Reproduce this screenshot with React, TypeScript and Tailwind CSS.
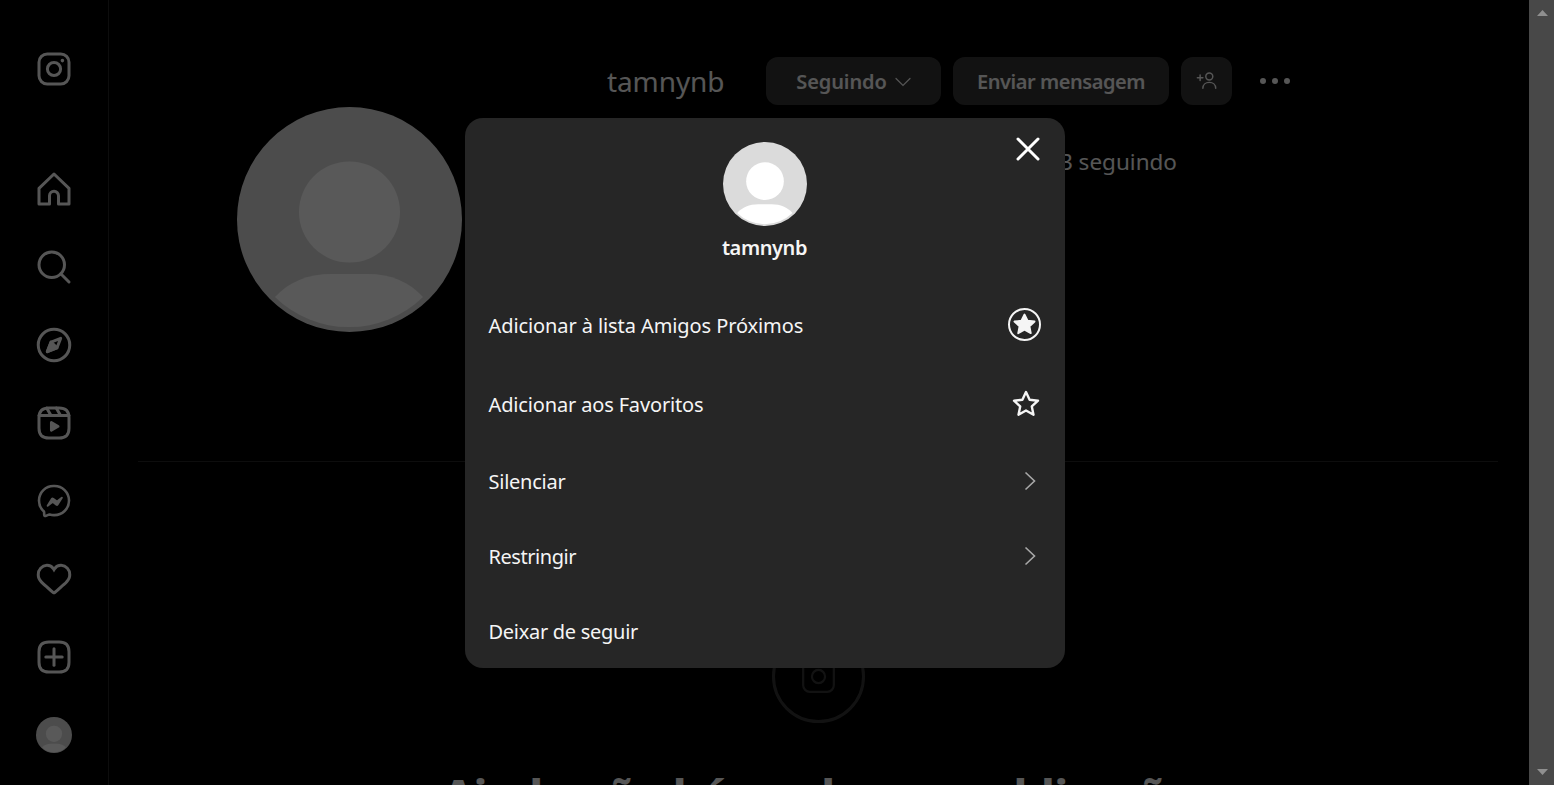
import React from 'react';

const font = 'font-["Noto_Sans",sans-serif]';

function NavIcon({ children }: { children: React.ReactNode }) {
  return (
    <svg viewBox="0 0 24 24" className="w-9 h-9 text-[#f5f5f5]" fill="none" stroke="currentColor" strokeWidth={2} strokeLinecap="round" strokeLinejoin="round">
      {children}
    </svg>
  );
}

function Avatar({ size }: { size: string }) {
  return (
    <svg viewBox="0 0 225 225" className={size}>
      <circle cx="112.5" cy="112.5" r="112.5" fill="#dbdbdb" />
      <circle cx="112.5" cy="105" r="50.5" fill="#ffffff" />
      <path d="M38 190C52 175 70 167 95 167H130C155 167 172 175 186 190A106 106 0 0 1 38 190Z" fill="#ffffff" />
    </svg>
  );
}

function Sidebar() {
  return (
    <aside className="w-[109px] shrink-0 h-full border-r border-[#262626] flex flex-col items-center pt-[51px]">
      <div className="h-9 mb-[84px]">
        <NavIcon>
          <rect x="2" y="2" width="20" height="20" rx="5.5" />
          <circle cx="12" cy="12" r="4.4" />
          <circle cx="17.6" cy="6.4" r="0.6" fill="currentColor" strokeWidth={1.2} />
        </NavIcon>
      </div>
      <div className="flex flex-col items-center gap-[42px]">
        <NavIcon>
          <path d="M9.005 16.545a2.997 2.997 0 0 1 2.997-2.997A2.997 2.997 0 0 1 15 16.545V22h7V11.543L12 2 2 11.543V22h7.005Z" />
        </NavIcon>
        <NavIcon>
          <path d="M19 10.5A8.5 8.5 0 1 1 10.5 2a8.5 8.5 0 0 1 8.5 8.5Z" />
          <line x1="16.511" y1="16.511" x2="22" y2="22" />
        </NavIcon>
        <NavIcon>
          <polygon points="13.941 13.953 7.581 16.424 10.06 10.056 16.42 7.585 13.941 13.953" />
          <polygon points="10.06 10.056 13.949 13.945 7.581 16.424 10.06 10.056" fill="currentColor" />
          <circle cx="12" cy="12" r="10.5" />
        </NavIcon>
        <NavIcon>
          <line x1="2.049" y1="7.002" x2="21.95" y2="7.002" />
          <line x1="13.504" y1="2.001" x2="16.362" y2="7.002" />
          <line x1="7.207" y1="2.11" x2="10.002" y2="7.002" />
          <path d="M2 12.001v3.449c0 2.849.698 4.006 1.606 4.945.94.908 2.098 1.607 4.946 1.607h6.896c2.848 0 4.006-.699 4.946-1.607.908-.939 1.606-2.096 1.606-4.945V8.552c0-2.848-.698-4.006-1.606-4.945C19.454 2.699 18.296 2 15.448 2H8.552c-2.848 0-4.006.699-4.946 1.607C2.698 4.546 2 5.704 2 8.552Z" />
          <path d="M9.763 17.664a.908.908 0 0 1-.454-.787V11.63a.909.909 0 0 1 1.364-.788l4.545 2.624a.909.909 0 0 1 0 1.575l-4.545 2.624a.91.91 0 0 1-.91 0Z" fill="currentColor" stroke="none" />
        </NavIcon>
        <NavIcon>
          <path d="M12.003 2.001a9.705 9.705 0 1 1 0 19.4 10.876 10.876 0 0 1-2.895-.384.798.798 0 0 0-.533.04l-1.984.876a.801.801 0 0 1-1.123-.708l-.054-1.78a.806.806 0 0 0-.27-.569 9.49 9.49 0 0 1-3.14-7.175 9.65 9.65 0 0 1 10-9.7Z" strokeWidth={1.739} />
          <path d="M17.79 10.132a.659.659 0 0 0-.962-.873l-2.556 2.05a.483.483 0 0 1-.58.012l-1.882-1.403a1.205 1.205 0 0 0-1.739.324l-2.855 4.53a.659.659 0 0 0 .962.873l2.556-2.05a.483.483 0 0 1 .58-.012l1.881 1.403a1.205 1.205 0 0 0 1.74-.324l2.855-4.53Z" fill="currentColor" stroke="none" />
        </NavIcon>
        <NavIcon>
          <path d="M16.792 3.904A4.989 4.989 0 0 1 21.5 9.122c0 3.072-2.652 4.959-5.197 7.222-2.512 2.243-3.865 3.469-4.303 3.752-.477-.309-2.143-1.823-4.303-3.752C5.141 14.072 2.5 12.167 2.5 9.122a4.989 4.989 0 0 1 4.708-5.218 4.21 4.21 0 0 1 3.675 1.941c.84 1.175.98 1.763 1.12 1.763s.278-.588 1.11-1.766a4.17 4.17 0 0 1 3.679-1.938m0-2a6.04 6.04 0 0 0-4.797 2.127 6.052 6.052 0 0 0-4.787-2.127A6.985 6.985 0 0 0 .5 9.122c0 3.61 2.55 5.827 5.015 7.97.283.246.569.494.853.747l1.027.918a44.998 44.998 0 0 0 3.518 3.018 2 2 0 0 0 2.174 0 45.263 45.263 0 0 0 3.626-3.115l.922-.824c.293-.26.59-.519.885-.774 2.334-2.025 4.98-4.32 4.98-7.94a6.985 6.985 0 0 0-6.708-7.218Z" fill="currentColor" stroke="none" />
        </NavIcon>
        <NavIcon>
          <path d="M2 12v3.45c0 2.849.698 4.005 1.606 4.944.94.909 2.098 1.608 4.946 1.608h6.896c2.848 0 4.006-.7 4.946-1.608C21.302 19.455 22 18.3 22 15.45V8.552c0-2.849-.698-4.006-1.606-4.945C19.454 2.7 18.296 2 15.448 2H8.552c-2.848 0-4.006.699-4.946 1.607C2.698 4.547 2 5.703 2 8.552Z" />
          <line x1="6.545" y1="12.001" x2="17.455" y2="12.001" />
          <line x1="12.003" y1="6.545" x2="12.003" y2="17.455" />
        </NavIcon>
        <Avatar size="w-9 h-9" />
      </div>
    </aside>
  );
}

function Profile() {
  return (
    <main className="flex-1 min-w-0 pl-[29px] pr-[31px] flex flex-col">
      <section className="flex shrink-0 h-[461px] pl-[99px] pt-[107px]">
        <Avatar size="w-[225px] h-[225px] shrink-0" />
        <div className="ml-[145px] -mt-[50px] flex-1">
          <div className="flex items-center h-[48px]">
            <span className="text-[28px] tracking-[-0.1px] text-[#f5f5f5] w-[159px]">tamnynb</span>
            <button className="w-[175px] h-[48px] pt-px rounded-xl bg-[#363636] text-[#f5f5f5] text-[20px] tracking-[-0.1px] font-semibold flex items-center justify-center gap-2">
              Seguindo
              <svg viewBox="0 0 16 10" className="w-4 h-[10px]" fill="none" stroke="currentColor" strokeWidth={1.2} strokeLinecap="round"><path d="M1 1.5 8 8.5 15 1.5" /></svg>
            </button>
            <button className="ml-3 w-[216px] h-[48px] pt-px rounded-xl bg-[#363636] text-[#f5f5f5] text-[20px] tracking-[-0.45px] font-semibold">Enviar mensagem</button>
            <button className="ml-3 w-[51px] h-[48px] rounded-xl bg-[#363636] text-[#f5f5f5] flex items-center justify-center">
              <svg viewBox="0 0 24 24" className="w-[22px] h-[22px]" fill="none" stroke="currentColor" strokeWidth={1.6} strokeLinecap="round">
                <circle cx="14.5" cy="7" r="3.8" />
                <path d="M7.5 20c0-4 3-6.5 7-6.5s7 2.5 7 6.5" />
                <path d="M1.5 8.5h6M4.5 5.5v6" />
              </svg>
            </button>
            <div className="ml-7 flex gap-[6px]">
              <span className="w-[6px] h-[6px] rounded-full bg-[#f5f5f5]" />
              <span className="w-[6px] h-[6px] rounded-full bg-[#f5f5f5]" />
              <span className="w-[6px] h-[6px] rounded-full bg-[#f5f5f5]" />
            </div>
          </div>
          <div className="mt-[42px] flex justify-end pr-[321px] text-[22.5px] text-[#f5f5f5] leading-[30px]">
            <span>183 seguindo</span>
          </div>
        </div>
      </section>
      <div className="h-px shrink-0 bg-[#262626]" />
      <section className="flex flex-col items-center pt-[168px]">
        <div className="w-[93px] h-[93px] shrink-0 rounded-full border-[3px] border-[#363636] flex items-center justify-center">
          <svg viewBox="0 0 32 32" className="w-[35px] h-[35px] text-[#363636]" fill="none" stroke="currentColor" strokeWidth={2}>
            <rect x="2" y="2" width="28" height="28" rx="6" />
            <circle cx="16" cy="16" r="6" />
          </svg>
        </div>
        <h2 className="mt-[42px] shrink-0 text-[43px] leading-[60px] font-extrabold text-[#f5f5f5] whitespace-nowrap">Ainda não há nenhuma publicação</h2>
      </section>
    </main>
  );
}

function Row({ label, children, className }: { label: string; children?: React.ReactNode; className: string }) {
  return (
    <div className={`flex items-center justify-between pl-6 text-[20px] text-[#f5f5f5] ${className}`}>
      <span>{label}</span>
      {children}
    </div>
  );
}

function Modal() {
  return (
    <div className="absolute inset-0 bg-black/65 flex items-center justify-center">
      <div className="relative w-[600px] h-[550px] rounded-[18px] bg-[#262626] flex flex-col">
        <button className="absolute top-[19px] right-[25px] text-white">
          <svg viewBox="0 0 24 24" className="w-6 h-6" fill="none" stroke="currentColor" strokeWidth={3} strokeLinecap="round">
            <path d="M2 2 22 22M22 2 2 22" />
          </svg>
        </button>
        <div className="flex flex-col items-center pt-6">
          <Avatar size="w-[84px] h-[84px]" />
          <span className="mt-2 text-[20px] leading-[28px] tracking-[-0.4px] font-semibold text-[#f5f5f5]">tamnynb</span>
        </div>
        <div className="flex flex-col mt-[25px]">
          <Row label="Adicionar à lista Amigos Próximos" className="h-[79px] pr-6 tracking-[-0.09px]">
            <svg viewBox="0 0 33 33" className="w-[33px] h-[33px] -mt-[3px] text-[#f5f5f5]">
              <circle cx="16.5" cy="16.5" r="15.5" fill="none" stroke="currentColor" strokeWidth={2} />
              <path d="M16.5 6.5l3.1 6.1 7 .9-5.1 4.8 1.3 6.9-6.3-3.4-6.3 3.4 1.3-6.9-5.1-4.8 7-.9Z" fill="currentColor" stroke="currentColor" strokeWidth={1.8} strokeLinejoin="round" />
            </svg>
          </Row>
          <Row label="Adicionar aos Favoritos" className="h-[79px] pr-6 tracking-[-0.15px]">
            <svg viewBox="0 0 30 30" className="w-[30px] h-[30px] -mt-0.5 text-[#f5f5f5]" fill="none" stroke="currentColor" strokeWidth={2.4} strokeLinejoin="round">
              <path d="M15 3l3.6 7.7 8.4 1-6.2 5.7 1.7 8.3-7.5-4.2-7.5 4.2 1.7-8.3L3 11.7l8.4-1Z" />
            </svg>
          </Row>
          <Row label="Silenciar" className="h-[75px] pr-[29px] tracking-[-0.25px]">
            <svg viewBox="0 0 12 20" className="w-3 h-5 -mt-0.5 text-[#a8a8a8]" fill="none" stroke="currentColor" strokeWidth={1.6}><path d="M1.5 1.5 10.5 10 1.5 18.5" /></svg>
          </Row>
          <Row label="Restringir" className="h-[75px] pr-[29px] tracking-[-0.45px]">
            <svg viewBox="0 0 12 20" className="w-3 h-5 -mt-0.5 text-[#a8a8a8]" fill="none" stroke="currentColor" strokeWidth={1.6}><path d="M1.5 1.5 10.5 10 1.5 18.5" /></svg>
          </Row>
          <Row label="Deixar de seguir" className="h-[75px] pr-6 tracking-[-0.28px]" />
        </div>
      </div>
    </div>
  );
}

function Scrollbar() {
  return (
    <div className="w-[25px] shrink-0 h-full bg-[#484848] flex flex-col items-center justify-between py-[10px] pl-px">
      <svg viewBox="0 0 11 6" className="w-[11px] h-[6px] text-[#8f8f8f]" fill="currentColor"><path d="M5.5 0 11 6H0Z" /></svg>
      <svg viewBox="0 0 11 6" className="w-[11px] h-[6px] text-[#8f8f8f]" fill="currentColor"><path d="M0 0H11L5.5 6Z" /></svg>
    </div>
  );
}

export default function App() {
  return (
    <div className={`flex h-[785px] w-full overflow-hidden bg-black ${font}`}>
      <div className="relative flex flex-1 min-w-0 h-full overflow-hidden">
        <Sidebar />
        <Profile />
        <Modal />
      </div>
      <Scrollbar />
    </div>
  );
}
